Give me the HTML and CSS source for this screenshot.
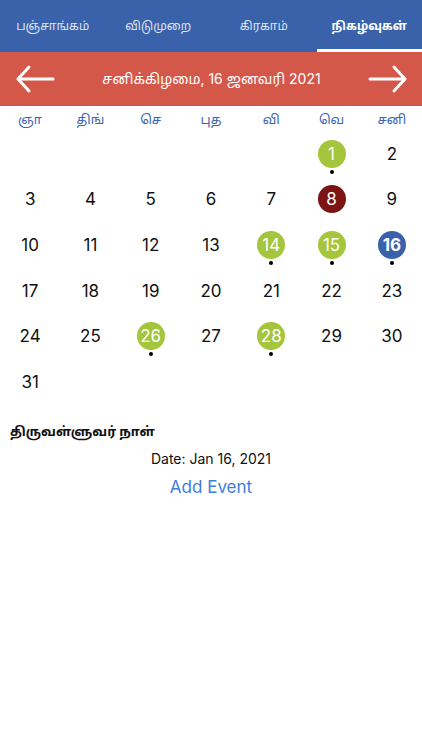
FILE: index.html
```html
<!DOCTYPE html>
<html lang="ta">
<head>
    <meta charset="UTF-8">
    <meta name="viewport" content="width=device-width, initial-scale=1.0">
    <title>நிகழ்வுகள்</title>
    <link rel="stylesheet" href="styles.css">
</head>
<body>
    <nav class="tabs">
        <a class="tab">பஞ்சாங்கம்</a>
        <a class="tab">விடுமுறை</a>
        <a class="tab">கிரகாம்</a>
        <a class="tab active">நிகழ்வுகள்</a>
    </nav>

    <div class="datebar">
        <svg class="arrow" viewBox="0 0 40 30"><path d="M38 15H3M14 3L3 15l11 12"/></svg>
        <span class="datebar-title">சனிக்கிழமை, 16 ஜனவரி 2021</span>
        <svg class="arrow" viewBox="0 0 40 30"><path d="M2 15h35M26 3l11 12-11 12"/></svg>
    </div>

    <div class="weekdays">
        <span>ஞா</span><span>திங்</span><span>செ</span><span>புத</span><span>வி</span><span>வெ</span><span>சனி</span>
    </div>

    <div class="month">
        <div class="day"></div><div class="day"></div><div class="day"></div>
        <div class="day"></div><div class="day"></div>
        <div class="day"><span class="num green">1</span><i class="dot"></i></div>
        <div class="day"><span class="num">2</span></div>

        <div class="day"><span class="num">3</span></div>
        <div class="day"><span class="num">4</span></div>
        <div class="day"><span class="num">5</span></div>
        <div class="day"><span class="num">6</span></div>
        <div class="day"><span class="num">7</span></div>
        <div class="day"><span class="num maroon">8</span></div>
        <div class="day"><span class="num">9</span></div>

        <div class="day"><span class="num">10</span></div>
        <div class="day"><span class="num">11</span></div>
        <div class="day"><span class="num">12</span></div>
        <div class="day"><span class="num">13</span></div>
        <div class="day"><span class="num green">14</span><i class="dot"></i></div>
        <div class="day"><span class="num green">15</span><i class="dot"></i></div>
        <div class="day"><span class="num today">16</span><i class="dot"></i></div>

        <div class="day"><span class="num">17</span></div>
        <div class="day"><span class="num">18</span></div>
        <div class="day"><span class="num">19</span></div>
        <div class="day"><span class="num">20</span></div>
        <div class="day"><span class="num">21</span></div>
        <div class="day"><span class="num">22</span></div>
        <div class="day"><span class="num">23</span></div>

        <div class="day"><span class="num">24</span></div>
        <div class="day"><span class="num">25</span></div>
        <div class="day"><span class="num green">26</span><i class="dot"></i></div>
        <div class="day"><span class="num">27</span></div>
        <div class="day"><span class="num green">28</span><i class="dot"></i></div>
        <div class="day"><span class="num">29</span></div>
        <div class="day"><span class="num">30</span></div>

        <div class="day"><span class="num">31</span></div>
    </div>

    <section class="event">
        <h3 class="event-title">திருவள்ளுவர் நாள்</h3>
        <p class="event-date">Date: Jan 16, 2021</p>
        <a class="add-event">Add Event</a>
    </section>
</body>
</html>
```

FILE: styles.css
```css
body {
    margin: 0;
    padding: 0;
    background: #fff;
    color: #111;
    font-family: Inter, "Noto Sans Tamil", "Noto Sans", "Lohit Tamil", sans-serif;
}

.tabs {
    display: grid;
    grid-template-columns: repeat(4, 1fr);
    height: 52px;
    background: #3a62ab;
}

.tab {
    display: flex;
    align-items: center;
    justify-content: center;
    color: rgba(255, 255, 255, 0.85);
    font-size: 12px;
    border-bottom: 3px solid transparent;
    padding-top: 2px;
}

.tab.active {
    color: #fff;
    font-weight: bold;
    border-bottom-color: #fff;
}

.datebar {
    display: flex;
    align-items: center;
    justify-content: space-between;
    height: 54px;
    padding: 0 14px 0 15px;
    background: #d4584a;
    color: #fff;
}

.datebar-title {
    font-size: 14px;
}

.arrow {
    width: 40px;
    height: 30px;
    fill: none;
    stroke: #fff;
    stroke-width: 3;
    stroke-linecap: round;
    stroke-linejoin: round;
}

.weekdays {
    display: grid;
    grid-template-columns: repeat(7, 1fr);
    height: 23px;
    align-items: center;
    color: #3c65b0;
    font-size: 13px;
    text-align: center;
    padding-top: 2px;
}

.month {
    display: grid;
    grid-template-columns: repeat(7, 1fr);
    grid-auto-rows: 45.6px;
}

.day {
    display: flex;
    flex-direction: column;
    align-items: center;
    justify-content: center;
    position: relative;
}

.num {
    width: 28px;
    height: 28px;
    border-radius: 50%;
    display: flex;
    align-items: center;
    justify-content: center;
    font-size: 17px;
}

.num.green {
    background: #a4c53c;
    color: #fff;
}

.num.maroon {
    background: #7b1412;
    color: #fff;
}

.num.today {
    background: #3a62ab;
    color: #fff;
    font-weight: bold;
}

.dot {
    position: absolute;
    left: 50%;
    top: 39px;
    width: 4px;
    height: 4px;
    margin-left: -2px;
    border-radius: 50%;
    background: #000;
}

.event {
    padding: 18px 10px 0;
    text-align: center;
}

.event-title {
    margin: 0;
    text-align: left;
    font-size: 13px;
    font-weight: bold;
}

.event-date {
    margin: 9px 0 0;
    font-size: 14px;
}

.add-event {
    display: inline-block;
    margin-top: 10px;
    color: #3d7ddb;
    font-size: 17px;
}
```
